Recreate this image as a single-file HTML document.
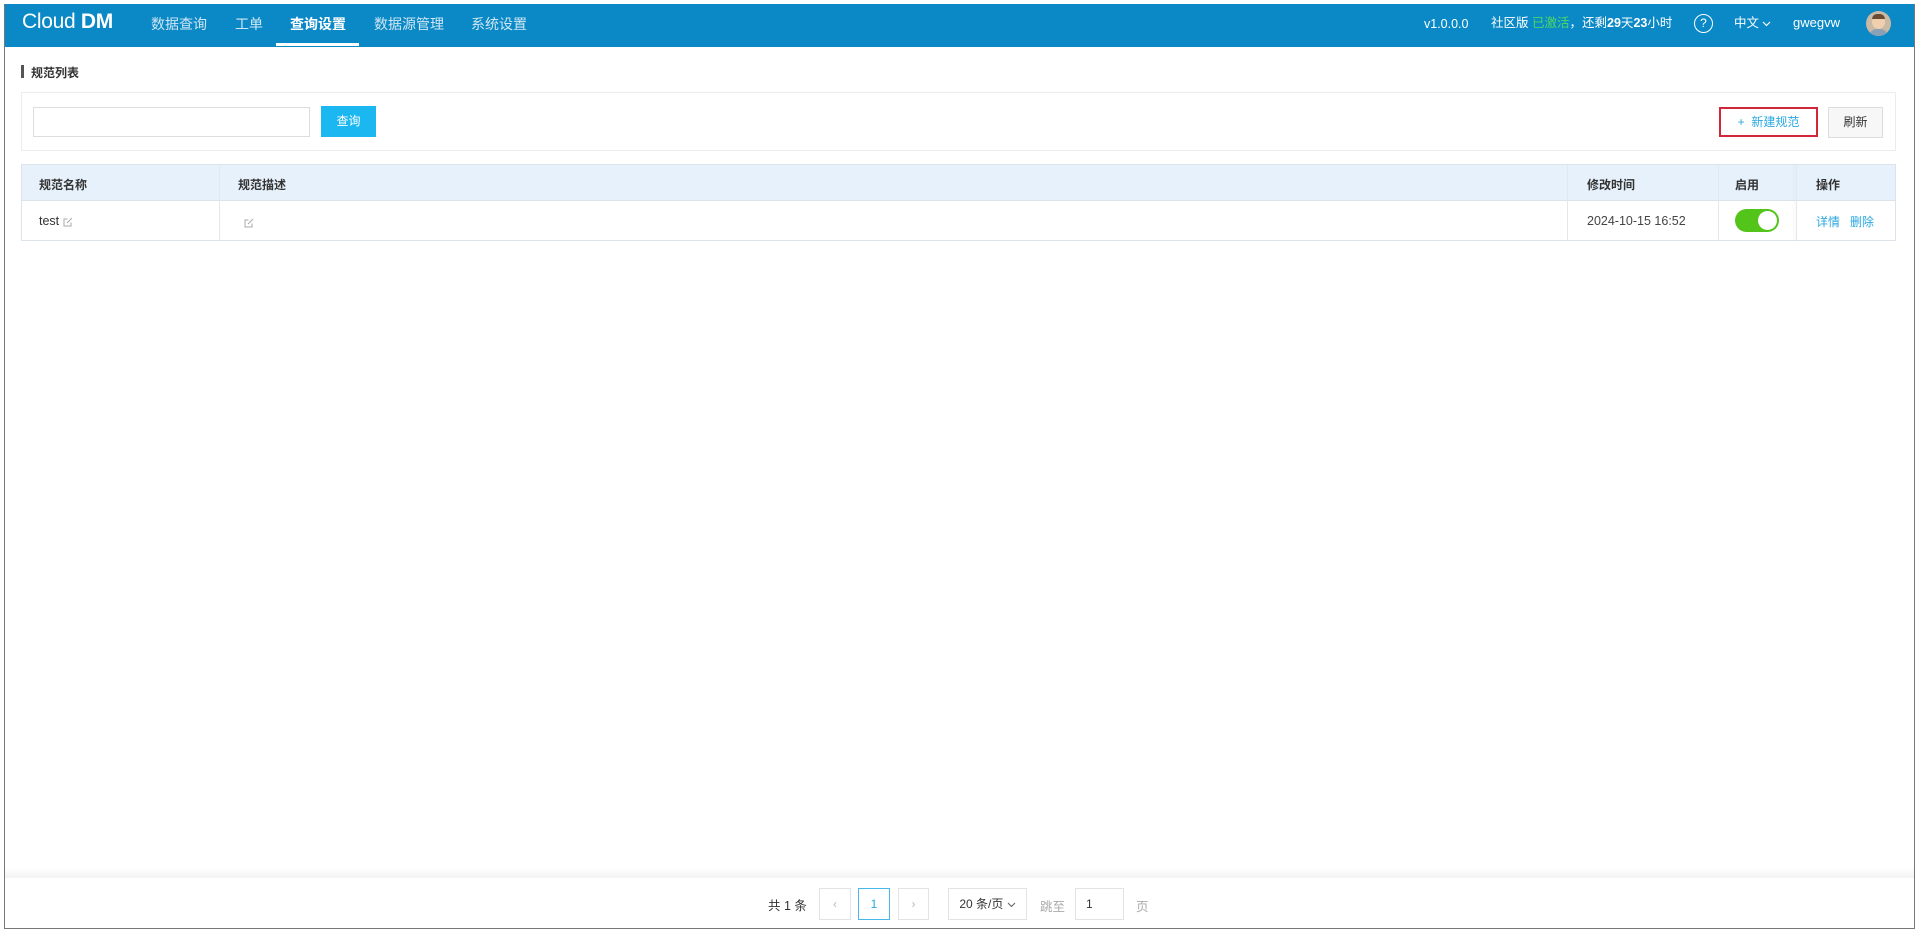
<!DOCTYPE html>
<html><head><meta charset="utf-8"><style>
*{margin:0;padding:0;box-sizing:border-box}
body{width:1920px;height:935px;background:#fff;font-family:"Liberation Sans","Noto Sans CJK SC",sans-serif;position:relative;overflow:hidden;color:#333}
.a{position:absolute;white-space:nowrap}
#frame{position:absolute;left:4px;top:4px;width:1911px;height:925px;border:1px solid #777;border-top:none}
#hdr{position:absolute;left:4px;top:4px;width:1911px;height:43px;background:#0a89c6}
.nav{color:#cfe6f4;font-size:14px;top:14px}
.hr{color:#fff;font-size:12.5px;top:14px;line-height:18px}
.th{font-size:12px;font-weight:bold;color:#333;top:176px}
.vl{position:absolute;width:1px;background:#e3e8ee}
.pb{position:absolute;top:888px;height:32px;border:1px solid #e3e3e3;background:#fff;font-size:12px;text-align:center;line-height:30px;color:#bbb}
.ed{display:inline-block;vertical-align:middle}
</style></head><body>
<div id="hdr"></div>
<div id="frame"></div>
<div class="a" style="left:22px;top:10px;color:#fff;font-size:21px;letter-spacing:-0.3px">Cloud <span style="font-weight:bold">DM</span></div>
<div class="a nav" style="left:151px">数据查询</div>
<div class="a nav" style="left:235px">工单</div>
<div class="a nav" style="left:290px;color:#fff;font-weight:bold">查询设置</div>
<div class="a" style="left:276px;top:43px;width:83px;height:3px;background:#fff"></div>
<div class="a nav" style="left:374px">数据源管理</div>
<div class="a nav" style="left:471px">系统设置</div>
<div class="a hr" style="left:1424px;top:15px">v1.0.0.0</div>
<div class="a hr" style="left:1491px">社区版 <span style="color:#4cd964">已激活</span>，还剩<b>29</b>天<b>23</b>小时</div>
<div class="a" style="left:1694px;top:14px;width:19px;height:19px;border:1.5px solid #fff;border-radius:50%;color:#fff;font-size:12px;text-align:center;line-height:16px">?</div>
<div class="a hr" style="left:1734px">中文 <svg width="9" height="6" viewBox="0 0 9 6" style="vertical-align:middle"><path d="M1 1l3.5 3.5L8 1" stroke="#fff" fill="none" stroke-width="1.2"/></svg></div>
<div class="a hr" style="left:1793px;font-size:13px;top:14px">gwegvw</div>
<div class="a" style="left:1866px;top:11px;width:25px;height:25px;border-radius:50%;background:#c9b9a5;overflow:hidden"><div style="position:absolute;left:6px;top:4px;width:13px;height:14px;border-radius:50%;background:#f0cfae"></div><div style="position:absolute;left:6px;top:3px;width:13px;height:5px;border-radius:6px 6px 0 0;background:#6b4a33"></div><div style="position:absolute;left:3px;top:18px;width:19px;height:8px;border-radius:9px 9px 0 0;background:#8aa0b5"></div></div>

<div class="a" style="left:21px;top:65px;width:3px;height:13px;background:#555"></div>
<div class="a" style="left:31px;top:64px;font-size:12px;font-weight:bold">规范列表</div>
<div class="a" style="left:21px;top:92px;width:1875px;height:59px;border:1px solid #ececec"></div>
<div class="a" style="left:33px;top:107px;width:277px;height:30px;border:1px solid #ddd"></div>
<div class="a" style="left:321px;top:106px;width:55px;height:31px;background:#1bb7f1;color:#fff;font-size:12px;text-align:center;line-height:31px">查询</div>
<div class="a" style="left:1719px;top:107px;width:99px;height:30px;border:2px solid #d2263a;color:#2aa8e0;font-size:12px;text-align:center;line-height:26px">+&nbsp;&nbsp;新建规范</div>
<div class="a" style="left:1828px;top:107px;width:55px;height:31px;border:1px solid #ddd;background:#f7f7f7;font-size:12px;text-align:center;line-height:29px">刷新</div>

<div class="a" style="left:21px;top:164px;width:1875px;height:77px;border:1px solid #dde3ea"></div>
<div class="a" style="left:22px;top:165px;width:1873px;height:36px;background:#e6f1fb;border-bottom:1px solid #dde3ea"></div>
<div class="vl" style="left:219px;top:165px;height:75px"></div>
<div class="vl" style="left:1567px;top:165px;height:75px"></div>
<div class="vl" style="left:1718px;top:165px;height:75px"></div>
<div class="vl" style="left:1796px;top:165px;height:75px;box-shadow:-2px 0 3px rgba(0,0,0,.08)"></div>
<div class="a th" style="left:39px">规范名称</div>
<div class="a th" style="left:238px">规范描述</div>
<div class="a th" style="left:1587px">修改时间</div>
<div class="a th" style="left:1735px">启用</div>
<div class="a th" style="left:1816px">操作</div>
<div class="a" style="left:39px;top:214px;font-size:12.5px">test <svg class="ed" width="10" height="10" viewBox="0 0 10 10"><path d="M8 5.5V9H1V2h3.5" stroke="#aaa" fill="none"/><path d="M4 6l5-5" stroke="#aaa"/></svg></div>
<div class="a" style="left:244px;top:214px"><svg class="ed" width="10" height="10" viewBox="0 0 10 10"><path d="M8 5.5V9H1V2h3.5" stroke="#aaa" fill="none"/><path d="M4 6l5-5" stroke="#aaa"/></svg></div>
<div class="a" style="left:1587px;top:214px;font-size:12.5px;color:#444">2024-10-15 16:52</div>
<div class="a" style="left:1735px;top:209px;width:44px;height:23px;border-radius:12px;background:#52c41a"><div style="position:absolute;right:2px;top:2px;width:19px;height:19px;border-radius:50%;background:#fff"></div></div>
<div class="a" style="left:1816px;top:213px;font-size:12px;color:#2aa8e0">详情&nbsp;&nbsp;&nbsp;删除</div>

<div class="a" style="left:5px;top:868px;width:1909px;height:10px;background:linear-gradient(#fff,#f3f3f3)"></div>
<div class="a" style="left:768px;top:895px;font-size:12.5px">共 1 条</div>
<div class="pb" style="left:819px;width:32px">‹</div>
<div class="pb" style="left:858px;width:32px;border-color:#49b8e8;color:#2aa8e0">1</div>
<div class="pb" style="left:898px;width:31px">›</div>
<div class="pb" style="left:948px;width:79px;color:#333">20 条/页 <svg width="9" height="6" viewBox="0 0 9 6" style="vertical-align:middle"><path d="M1 1l3.5 3.5L8 1" stroke="#666" fill="none" stroke-width="1.1"/></svg></div>
<div class="a" style="left:1040px;top:896px;font-size:12.5px;color:#aaa">跳至</div>
<div class="pb" style="left:1075px;width:49px;color:#333;text-align:left;padding-left:10px">1</div>
<div class="a" style="left:1136px;top:896px;font-size:12.5px;color:#aaa">页</div>
</body></html>
